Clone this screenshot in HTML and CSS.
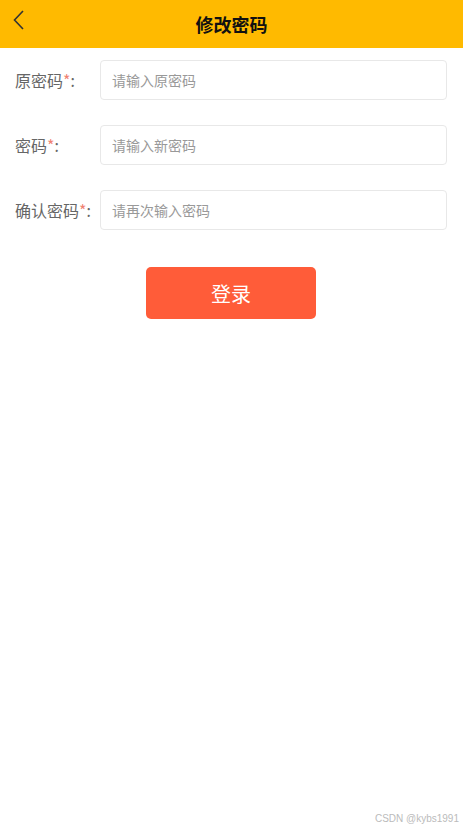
FILE: index.html
```html
<!DOCTYPE html>
<html lang="zh-CN">
<head>
  <meta charset="UTF-8" />
  <meta name="viewport" content="width=device-width, initial-scale=1.0"/>
  <title>修改密码</title>
  <link rel="stylesheet" href="styles.css">
</head>
<body>

<div class="header">
  <span class="back">
    <svg width="12" height="20" viewBox="0 0 12 20"><path d="M10 1 L1.5 10 L10 19" fill="none" stroke="#333" stroke-width="1.6"/></svg>
  </span>
  <h1>修改密码</h1>
</div>

<div class="form">
  <div class="row">
    <label>原密码<span class="req">*</span>:</label>
    <input type="password" placeholder="请输入原密码" />
  </div>
  <div class="row">
    <label>密码<span class="req">*</span>:</label>
    <input type="password" placeholder="请输入新密码" />
  </div>
  <div class="row">
    <label>确认密码<span class="req">*</span>:</label>
    <input type="password" placeholder="请再次输入密码" />
  </div>
  <button class="submit">登录</button>
</div>

<p class="mark">CSDN @kybs1991</p>

</body>
</html>
```

FILE: styles.css
```css
body {
  margin: 0;
  height: 826px;
  position: relative;
  font-family: "Noto Sans CJK SC", "Noto Sans", sans-serif;
  background: #fff;
}

.header {
  height: 48px;
  background: #ffba00;
  display: flex;
  align-items: center;
  justify-content: center;
  position: relative;
}

.back {
  position: absolute;
  left: 13px;
  top: 10px;
  line-height: 0;
}

.header h1 {
  margin: 0;
  font-size: 18px;
  font-weight: bold;
  color: #111;
}

.form {
  padding: 12px 16px 0 15px;
}

.row {
  display: flex;
  align-items: center;
  margin-bottom: 25px;
}

.row label {
  width: 85px;
  font-size: 16px;
  color: #666;
}

.req {
  color: #f08272;
}

.row input {
  flex: 1;
  height: 40px;
  box-sizing: border-box;
  border: 1px solid #e8e8e8;
  border-radius: 4px;
  padding: 0 11px;
  font-family: inherit;
  font-size: 14px;
  outline: none;
}

.row input::placeholder {
  color: #999;
}

.submit {
  display: block;
  margin: 37px auto 0;
  width: 170px;
  height: 52px;
  background: #ff5c39;
  color: #fff;
  border: none;
  border-radius: 5px;
  font-family: inherit;
  font-size: 20px;
  cursor: pointer;
}

.mark {
  position: absolute;
  right: 4px;
  bottom: 2px;
  margin: 0;
  font-family: "Liberation Sans", sans-serif;
  font-size: 10px;
  color: #bbb;
}
```
